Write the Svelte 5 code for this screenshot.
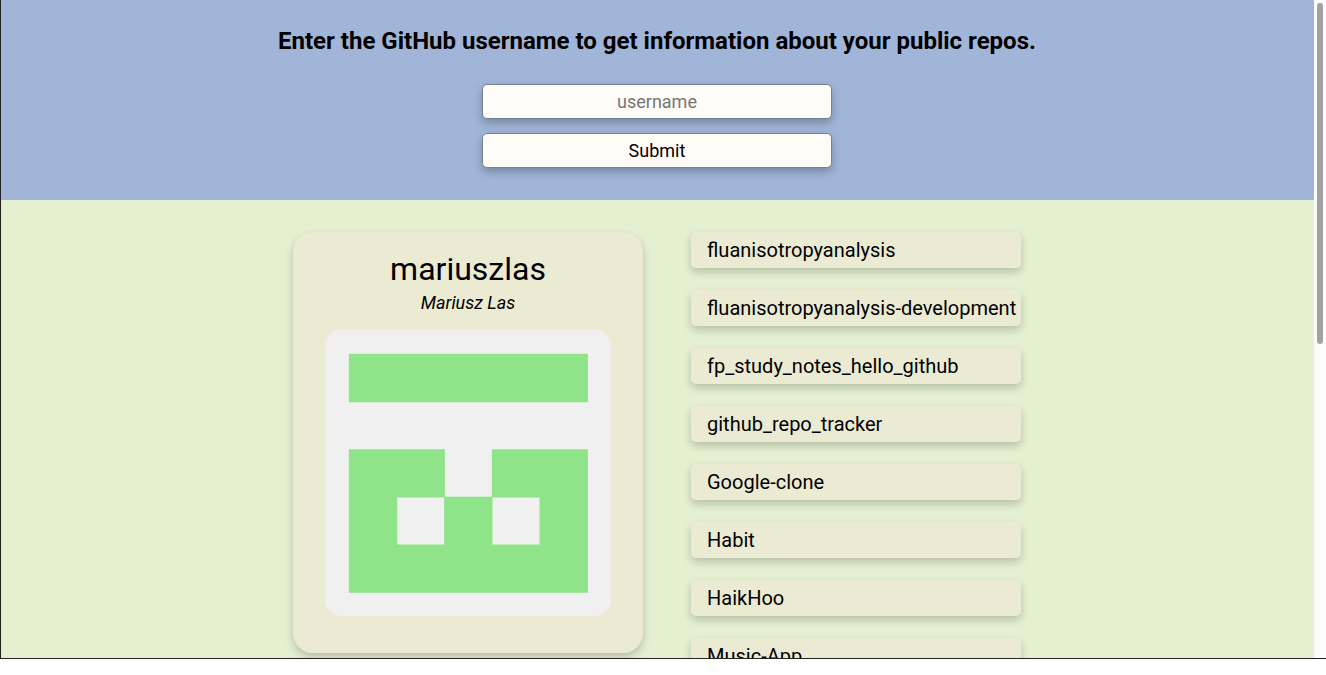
<script>
  let username = $state('');

  const user = { login: 'mariuszlas', name: 'Mariusz Las' };

  const repos = [
    'fluanisotropyanalysis',
    'fluanisotropyanalysis-development',
    'fp_study_notes_hello_github',
    'github_repo_tracker',
    'Google-clone',
    'Habit',
    'HaikHoo',
    'Music-App'
  ];

  function submit(event) {
    event.preventDefault();
  }
</script>

<div class="window">
  <div class="page">
    <header>
      <h1>Enter the GitHub username to get information about your public repos.</h1>
      <form onsubmit={submit}>
        <input type="text" placeholder="username" aria-label="username" bind:value={username} />
        <button type="submit">Submit</button>
      </form>
    </header>

    <main>
      <section class="card">
        <h2>{user.login}</h2>
        <p>{user.name}</p>
        <svg class="avatar" viewBox="0 0 420 420" aria-hidden="true">
          <rect width="420" height="420" fill="#f0f0f0" />
          <path
            fill="#8fe388"
            fill-rule="evenodd"
            d="M35 35H386V106H35ZM35 175H176V245H245V175H386V386H35ZM106 246V315H175V246ZM246 246V315H315V246Z"
          />
        </svg>
      </section>

      <ul>
        {#each repos as repo}
          <li><button type="button">{repo}</button></li>
        {/each}
      </ul>
    </main>
  </div>
  <div class="rail"><div class="thumb"></div></div>
</div>

<style>
  :global(body) {
    margin: 0;
    background: #fff;
    font-family: Roboto, 'Liberation Sans', sans-serif;
    color: #000;
  }

  .window {
    display: flex;
    box-sizing: border-box;
    height: calc(100vh - 16px);
    overflow: hidden;
    border-left: 1px solid #222;
    border-bottom: 1px solid #222;
    background: #e4f0d0;
  }

  .page {
    flex: 1;
    min-width: 0;
  }

  .rail {
    flex: none;
    box-sizing: border-box;
    width: 12px;
    padding: 3px;
    background: #fcfcfc;
  }

  .thumb {
    height: calc(52% + 2px);
    border-radius: 3px;
    background: #a2a2a2;
  }

  header {
    display: flex;
    flex-direction: column;
    align-items: center;
    gap: 29px;
    padding: 27px 17px 32px 16px;
    background: #a1b5d8;
  }

  h1 {
    margin: 0;
    font-size: 24px;
    line-height: 28px;
    font-weight: 700;
    text-align: center;
  }

  form {
    display: flex;
    flex-direction: column;
    gap: 14px;
    width: 350px;
    max-width: 100%;
  }

  input,
  form button {
    box-sizing: border-box;
    width: 100%;
    height: 35px;
    padding: 0 8px;
    border: 1px solid #738290;
    border-radius: 5px;
    background: #fffcf7;
    color: #000;
    font: inherit;
    font-size: 18px;
    text-align: center;
    box-shadow: 0 4px 8px rgba(0, 0, 0, 0.25);
  }

  input::placeholder {
    color: #757575;
  }

  main {
    display: flex;
    justify-content: center;
    align-items: flex-start;
    gap: 48px;
    padding: 32px 17px 32px 16px;
  }

  .card {
    box-sizing: border-box;
    width: 350px;
    padding: 18px 32px 37px;
    border-radius: 20px;
    background: #ebebd3;
    text-align: center;
    box-shadow: 0 4px 8px rgba(0, 0, 0, 0.2);
  }

  h2 {
    margin: 0;
    font-size: 32px;
    line-height: 38px;
    font-weight: 400;
  }

  p {
    margin: 0 0 12px;
    font-size: 18px;
    line-height: 30px;
    font-style: italic;
  }

  .avatar {
    display: block;
    width: 100%;
    border-radius: 16px;
  }

  ul {
    display: flex;
    flex-direction: column;
    gap: 22px;
    width: 330px;
    margin: 0;
    padding: 0;
    list-style: none;
  }

  li button {
    display: block;
    width: 100%;
    height: 36px;
    padding: 0 0 0 16px;
    border: 0;
    border-radius: 5px;
    background: #ebebd3;
    color: #000;
    font: inherit;
    font-size: 20px;
    text-align: left;
    white-space: nowrap;
    box-shadow: 0 4px 8px rgba(0, 0, 0, 0.2);
  }
</style>
